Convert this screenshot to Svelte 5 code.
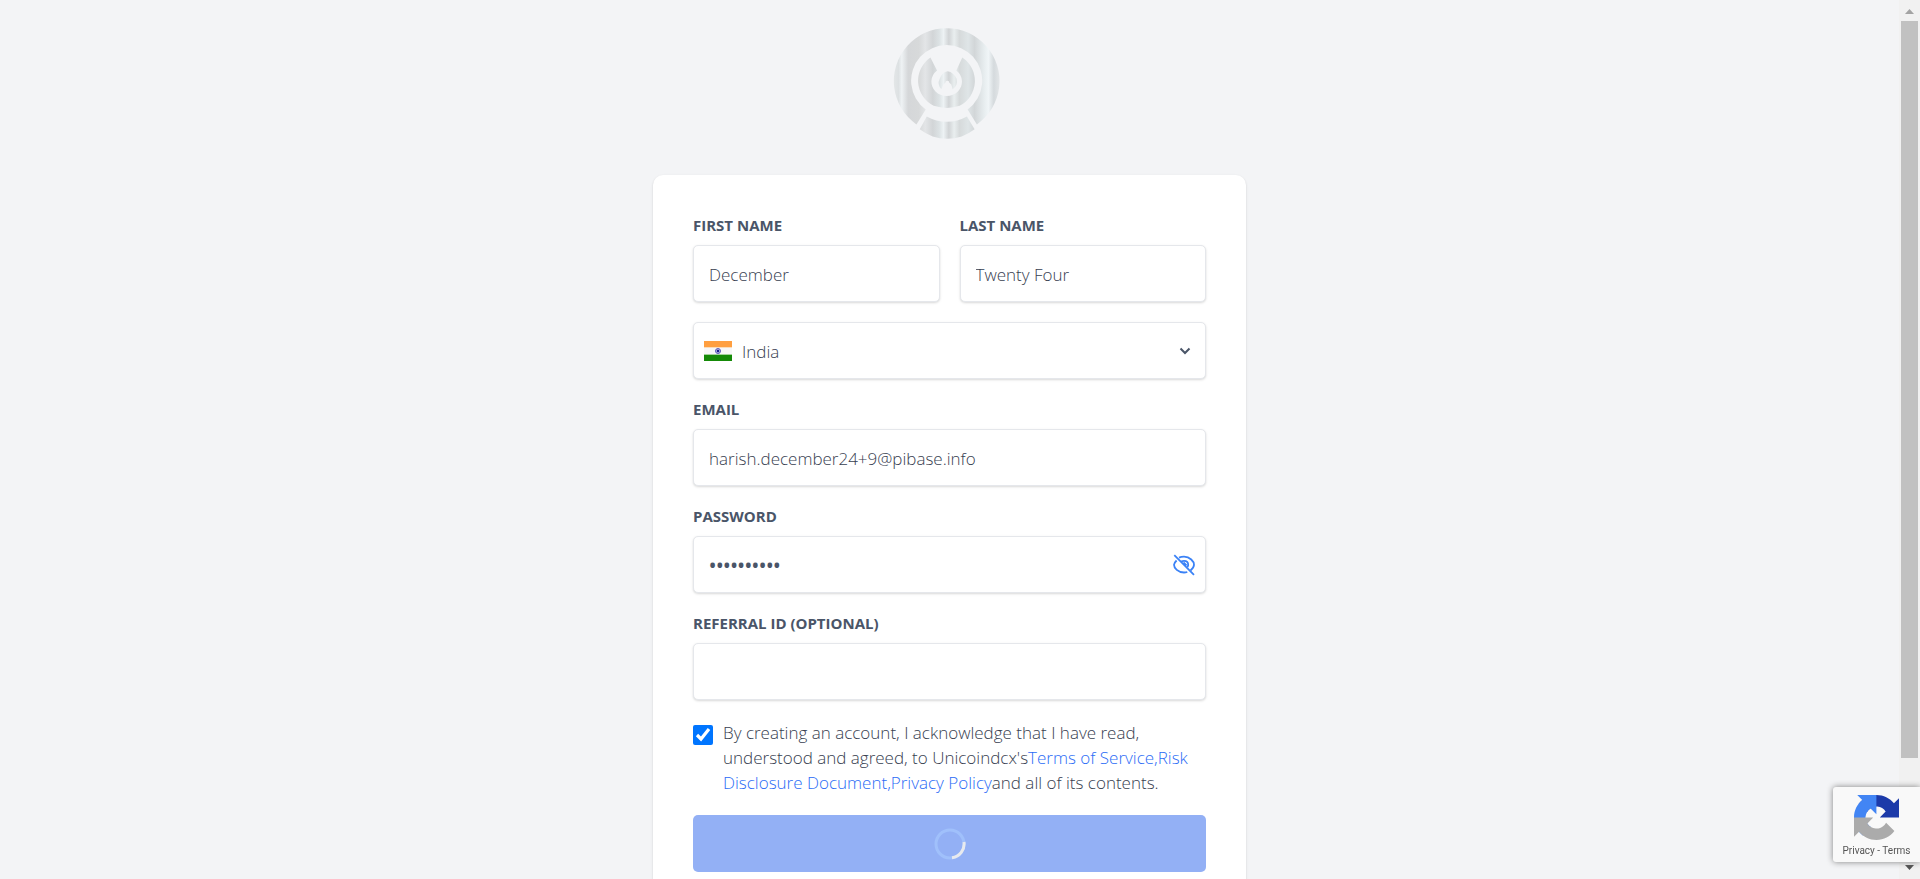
<script>
  let firstName = $state('December');
  let lastName = $state('Twenty Four');
  let country = $state('India');
  let email = $state('harish.december24+9@pibase.info');
  let password = $state('December24');
  let referral = $state('');
  let accepted = $state(true);
  let visible = $state(false);
</script>

<div class="app">
  <main>
    <svg class="logo" viewBox="38 20 342 340" aria-hidden="true">
      <defs>
        <linearGradient id="silver" gradientUnits="userSpaceOnUse" x1="38" y1="0" x2="360" y2="0">
          <stop offset="0" stop-color="#e4e7e8" />
          <stop offset=".05" stop-color="#dde1e3" />
          <stop offset=".08" stop-color="#eef2f4" />
          <stop offset=".14" stop-color="#d5d7d9" />
          <stop offset=".24" stop-color="#d7d9da" />
          <stop offset=".3" stop-color="#e3e5e7" />
          <stop offset=".37" stop-color="#d2d5d7" />
          <stop offset=".43" stop-color="#dce2e4" />
          <stop offset=".47" stop-color="#edf2f4" />
          <stop offset=".52" stop-color="#d1d4d6" />
          <stop offset=".57" stop-color="#e9eeef" />
          <stop offset=".62" stop-color="#d6dadb" />
          <stop offset=".7" stop-color="#dfe5e7" />
          <stop offset=".76" stop-color="#d2d6d8" />
          <stop offset=".85" stop-color="#e7edef" />
          <stop offset=".89" stop-color="#f0f5f7" />
          <stop offset=".94" stop-color="#d5dadd" />
          <stop offset="1" stop-color="#e4e7e9" />
        </linearGradient>
      </defs>
      <g fill="url(#silver)">
        <path d="M108 313A159 159 0 1 1 290 313L262 268A107 107 0 1 0 136 268Z" />
        <path d="M139 289A124 124 0 0 0 260 289L283 328A134 134 0 0 1 118 328Z" />
        <path d="M150 112L170 151A46 43 0 1 0 228 151L246 112A84 84 0 0 1 238 257Q200 270 160 257A84 84 0 0 1 150 112Z" />
        <path d="M183 207A27 27 0 0 1 178 176Q185 156 202 153Q220 156 229 176A27 27 0 0 1 217 207L213 193L207 188A6 6 0 1 0 195 188L189 193Z" />
      </g>
    </svg>

    <form class="card" onsubmit={(e) => e.preventDefault()}>
      <div class="row">
        <div class="field">
          <label for="first">FIRST NAME</label>
          <input id="first" class="control" type="text" bind:value={firstName} />
        </div>
        <div class="field">
          <label for="last">LAST NAME</label>
          <input id="last" class="control" type="text" bind:value={lastName} />
        </div>
      </div>

      <div class="wrap">
        <select class="control country" aria-label="Country" bind:value={country}>
          <option>India</option>
        </select>
        <svg class="flag" viewBox="0 0 28 20" aria-hidden="true">
          <path fill="#ff9f40" d="M0 0h28v6H0z" />
          <path fill="#fbdcb9" d="M0 6h28v1H0z" />
          <path fill="#f7f7f8" d="M0 7h28v6H0z" />
          <path fill="#a4d39b" d="M0 13h28v1H0z" />
          <path fill="#158a08" d="M0 14h28v6H0z" />
          <circle cx="14" cy="10" r="2.5" fill="#b9b9e2" stroke="#5a5aba" />
          <circle cx="14" cy="10" r="1.2" fill="#17178d" />
        </svg>
        <svg class="chevron" viewBox="0 0 10 6" aria-hidden="true">
          <path d="M0.500 0.500L5 5L9.500 0.500" fill="none" stroke="#4a5568" stroke-width="2" />
        </svg>
      </div>

      <div class="field">
        <label for="email">EMAIL</label>
        <input id="email" class="control" type="email" bind:value={email} />
      </div>

      <div class="field">
        <label for="password">PASSWORD</label>
        <div class="wrap">
          <input id="password" class="control secret" type={visible ? 'text' : 'password'} bind:value={password} />
          <button class="eye" type="button" aria-label="Toggle password visibility" onclick={() => (visible = !visible)}>
            <svg viewBox="0 0 22 22" fill="none" stroke="#3b82f6" stroke-width="1.8" aria-hidden="true">
              <path d="M6 3.6Q8.200 2.700 11 2.700C17 2.700 21 7.500 21 10.700Q21 13.500 17.500 16.500" />
              <path d="M3.600 6.500Q1 9 1 10.800C1 14 5 18.500 11 18.500Q12.800 18.500 14.300 18" />
              <path d="M8 7.500Q9.500 6.800 11 6.800C13.500 6.800 15.200 8.500 15.200 11L14.500 13.200" />
              <path d="M10.500 8.500L13.500 11.500M1.300 1.200L21 20.800" />
            </svg>
          </button>
        </div>
      </div>

      <div class="field">
        <label for="referral">REFERRAL ID (OPTIONAL)</label>
        <input id="referral" class="control" type="text" bind:value={referral} />
      </div>

      <div class="terms">
        <input id="accept" type="checkbox" bind:checked={accepted} />
        <p>
          <label for="accept">By creating an account, I acknowledge that I have read, understood and agreed, to Unicoindcx's</label><a href="#terms">Terms of Service,</a><a href="#risk">Risk Disclosure Document,</a><a href="#privacy">Privacy Policy</a>and all of its contents.
        </p>
      </div>

      <button class="submit" type="submit" aria-label="Create account">
        <svg viewBox="0 0 32 32" fill="none" stroke-width="3" aria-hidden="true">
          <circle cx="16" cy="16" r="14" stroke="#a0c0fb" />
          <path d="M30 14A14 14 0 0 1 18 29.800" stroke="#e8eaee" />
        </svg>
      </button>
    </form>
  </main>

  <div class="scrollbar" aria-hidden="true">
    <svg viewBox="0 0 9 5"><path d="M0 5L4.500 0L9 5Z" fill="#a3a3a3" /></svg>
    <div class="track"><div class="thumb"></div></div>
    <svg viewBox="0 0 9 5"><path d="M0 0L4.500 5L9 0Z" fill="#505050" /></svg>
  </div>

  <aside class="badge">
    <svg viewBox="0 0 64 64" aria-hidden="true">
      <path fill="#1c3aa9" d="M64 31.955l-.033-1.37V4.687l-7.160 7.160C50.948 4.674 42.033.093 32.050.093c-10.400 0-19.622 4.960-25.458 12.640l11.736 11.860a15.550 15.550 0 0 1 4.754-5.334c2.050-1.600 4.952-2.906 8.968-2.906.485 0 .860.057 1.135.163 4.976.393 9.288 3.140 11.828 7.124l-8.307 8.307L64 31.953" />
      <path fill="#4285f4" d="M31.862.094l-1.370.033H4.594l7.160 7.160C4.580 13.147 0 22.060 0 32.046c0 10.400 4.960 19.622 12.640 25.458L24.500 45.768a15.550 15.550 0 0 1-5.334-4.754c-1.600-2.050-2.906-4.952-2.906-8.968 0-.485.057-.860.163-1.135.393-4.976 3.140-9.288 7.124-11.828l8.307 8.307L31.860.095" />
      <path fill="#ababab" d="M.001 32.045l.033 1.370v25.898l7.160-7.160c5.860 7.173 14.774 11.754 24.760 11.754 10.400 0 19.622-4.960 25.458-12.640l-11.736-11.860a15.550 15.550 0 0 1-4.754 5.334c-2.050 1.600-4.952 2.906-8.968 2.906-.485 0-.860-.057-1.135-.163-4.976-.393-9.288-3.140-11.828-7.124l8.307-8.307c-10.522.040-22.400.066-27.295-.005" />
    </svg>
    <div><a href="#google-privacy">Privacy</a> - <a href="#google-terms">Terms</a></div>
  </aside>
</div>

<style>
  :global(body) {
    margin: 0;
  }
  .app {
    display: flex;
    height: 100vh;
    overflow: hidden;
    background: #f3f4f6;
    color: #374050;
    font-family: 'Segoe UI', 'Open Sans', 'Noto Sans', sans-serif;
    font-size: 17px;
    font-weight: 300;
    line-height: 25px;
  }
  .app * {
    box-sizing: border-box;
  }
  main {
    flex: 1;
    display: flex;
    flex-direction: column;
    align-items: center;
    padding-top: 27px;
    overflow-y: auto;
    scrollbar-width: none;
  }
  .logo {
    flex: none;
    width: 114px;
    height: 113px;
    margin-bottom: 35px;
  }
  .card {
    display: flex;
    flex-direction: column;
    gap: 20px;
    flex: none;
    width: 100%;
    max-width: 593px;
    padding: 40px;
    background: #fff;
    border-radius: 10px;
    box-shadow: 0 1px 3px rgba(0, 0, 0, 0.1), 0 1px 2px rgba(0, 0, 0, 0.06);
  }
  .row {
    display: flex;
    gap: 20px;
  }
  .field {
    flex: 1;
    min-width: 0;
  }
  .field > label {
    display: block;
    height: 30px;
    color: #4a5568;
    font-size: 15px;
    font-weight: 700;
    line-height: 20px;
  }
  .control {
    display: block;
    width: 100%;
    height: 57px;
    margin: 0;
    padding: 2px 15px 0;
    border: 1px solid #e5e7eb;
    border-radius: 5px;
    background: #fff;
    box-shadow: 0 1px 3px rgba(0, 0, 0, 0.1), 0 1px 2px rgba(0, 0, 0, 0.06);
    color: inherit;
    font: inherit;
    outline: none;
  }
  .wrap {
    position: relative;
  }
  .country {
    appearance: none;
    padding-left: 48px;
  }
  .flag,
  .chevron,
  .eye {
    position: absolute;
    top: 0;
    bottom: 0;
    margin: auto 0;
  }
  .flag {
    left: 11px;
    width: 28px;
    height: 20px;
  }
  .chevron {
    right: 16px;
    width: 10px;
    height: 6px;
    overflow: visible;
    pointer-events: none;
  }
  .secret {
    padding-right: 48px;
  }
  .secret[type='password'] {
    color: #4a5568;
    font-size: 19px;
    font-weight: 600;
  }
  .eye {
    right: 11px;
    width: 22px;
    height: 22px;
    padding: 0;
    border: 0;
    background: none;
    cursor: pointer;
  }
  .eye svg {
    display: block;
  }
  .terms {
    display: flex;
    align-items: flex-start;
    gap: 10px;
  }
  .terms input {
    flex: none;
    width: 20px;
    height: 20px;
    margin: 5px 0 0;
    accent-color: #0075ff;
  }
  .terms p {
    margin: 0;
  }
  .terms a {
    color: #2b6cf6;
    text-decoration: none;
  }
  .submit {
    display: flex;
    align-items: center;
    justify-content: center;
    height: 57px;
    padding: 0;
    border: 0;
    border-radius: 5px;
    background: #93b0f5;
  }
  .submit svg {
    width: 32px;
    height: 32px;
  }
  .scrollbar {
    display: flex;
    flex-direction: column;
    align-items: center;
    flex: none;
    width: 21px;
    padding: 9px 0;
    background: #f1f1f1;
  }
  .scrollbar svg {
    flex: none;
    width: 9px;
    height: 5px;
  }
  .track {
    flex: 1;
    padding: 7px 0;
  }
  .thumb {
    width: 17px;
    height: 88%;
    background: #c1c1c1;
  }
  .badge {
    position: fixed;
    right: 0;
    bottom: 17px;
    display: flex;
    flex-direction: column;
    align-items: center;
    width: 87px;
    height: 75px;
    padding-top: 8px;
    border-radius: 3px 0 0 3px;
    background: #f9f9f9;
    box-shadow: 0 0 6px gray;
    color: #555;
    font-family: Roboto, sans-serif;
    font-size: 10px;
    font-weight: 400;
    line-height: 22px;
  }
  .badge svg {
    width: 47px;
    height: 47px;
  }
  .badge a {
    color: inherit;
    text-decoration: none;
  }
</style>
